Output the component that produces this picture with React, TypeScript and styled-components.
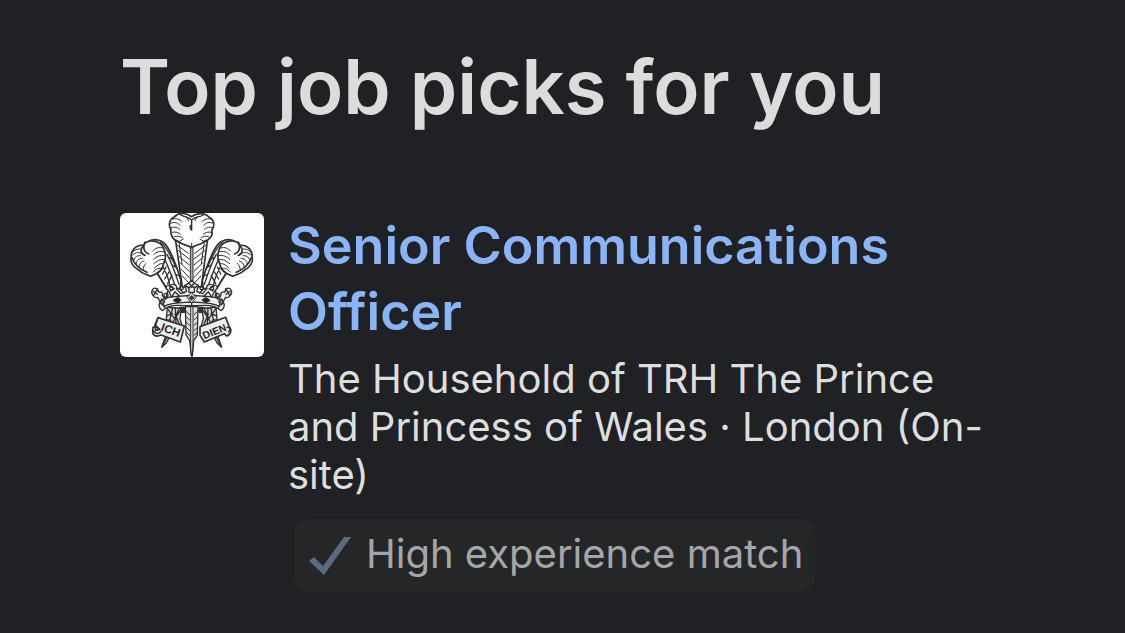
import React from 'react';
import styled, { createGlobalStyle } from 'styled-components';

const GlobalStyle = createGlobalStyle`
  *, *::before, *::after { box-sizing: border-box; }
  body {
    margin: 0;
    background: #202124;
    font-family: Inter, "Liberation Sans", sans-serif;
  }
`;

const Page = styled.main`
  min-height: 100vh;
  padding: 38px 120px;
  background: #202124;
`;

const Heading = styled.h1`
  margin: 0 0 79px;
  color: #dcdcdc;
  font-size: 76px;
  font-weight: 600;
  line-height: 96px;
`;

const JobCard = styled.article`
  display: flex;
  align-items: flex-start;
  gap: 24px;
`;

const LogoFrame = styled.div`
  flex: none;
  width: 144px;
  height: 144px;
  border-radius: 6px;
  overflow: hidden;
  background: #fff;

  svg { display: block; width: 100%; height: 100%; }
`;

const Details = styled.div`
  flex: 1;
  min-width: 0;
`;

const JobTitle = styled.h2`
  margin: 0 0 10px;
  font-size: 52px;
  font-weight: 600;
  line-height: 66px;
`;

const JobLink = styled.a`
  color: #8ab4f8;
  text-decoration: none;
`;

const Company = styled.p`
  margin: 0;
  color: #dedede;
  font-size: 40px;
  line-height: 48px;
`;

const Badge = styled.div`
  display: inline-flex;
  align-items: center;
  gap: 12px;
  height: 72px;
  margin: 20px 0 0 6px;
  padding: 0 12px 4px;
  border-radius: 14px;
  background: #252628;
  color: #a5a6a8;
  font-size: 40px;
  white-space: nowrap;

  svg { flex: none; width: 48px; height: 48px; }
`;

const SideFeather = () => (
  <g>
    <path fill="#fff" strokeWidth="5" d="M104 113C125 97 153 103 166 126C184 153 195 188 207 226L204 251L164 250L135 204L149 181L118 144Z" />
    <path strokeWidth="4" d="M145 111C166 126 177 156 193 188M165 148C180 174 192 210 201 238M157 161C172 191 181 219 190 244M151 183C164 204 171 225 176 248M136 205L163 250M162 186L152 207M171 201L158 222M180 211L167 236M169 157L183 163M181 180L195 189M190 207L202 213" />
    <path fill="#fff" strokeWidth="5" d="M95 120C69 120 55 138 58 158C53 170 64 187 80 195C91 208 105 207 116 214C134 207 153 198 154 177C166 159 160 130 145 116C126 102 102 107 95 120Z" />
    <path strokeWidth="5" d="M97 118C82 133 86 147 99 151M99 111C91 131 96 141 110 147M60 158C67 177 84 193 105 202" />
    <path strokeWidth="3" d="M153 129C139 125 129 130 122 138M158 141C143 136 133 141 125 149M159 152C144 149 133 155 125 163M157 164C144 161 134 169 125 176M153 176C141 174 134 184 127 190M146 190C139 188 130 194 124 201M64 139C71 133 79 131 86 132M61 151C69 142 77 141 87 144M65 166C68 154 77 151 85 152M72 177C74 164 82 160 91 160M81 187C81 176 89 169 96 168M93 197C93 186 98 178 102 175" />
  </g>
);

const SideCrown = () => (
  <g strokeWidth="4">
    <path fill="#ddd" d="M166 306L185 309L208 309L204 342L212 367L192 365L174 345L163 344Z" />
    <path d="M166 310L188 341L204 318M182 307L174 344M189 327L204 362M202 309L184 350M164 333L181 325M190 309L192 354" />
    <path fill="#333" d="M205 307H217V322H208Z" />
    <path fill="#bbb" d="M163 387L149 427L163 414L174 392Z" />
    <path d="M167 390L151 425" />
    <path fill="#eee" d="M121 255C126 245 139 250 139 261C148 259 154 264 151 272L161 283L168 255C157 249 164 237 174 242C184 233 198 242 193 251L206 266L224 259L218 242L239 230V302H213C183 299 166 303 151 317C139 308 139 299 145 291L137 277C126 281 115 265 121 255Z" />
    <path d="M124 259L136 268M137 251L125 271M151 283C181 270 207 276 239 270M155 304C180 291 207 293 239 291M170 258L179 277L189 260L204 275M172 243L187 252L175 258M202 251L216 264M219 241L232 250M151 291L160 310" />
    <path fill="#222" d="M185 286L196 278L207 285L197 293Z" />
    <path fill="#777" d="M143 292L149 282L158 289L151 300Z" />
    <circle cx="178" cy="250" r="5" />
    <circle cx="162" cy="271" r="6" />
    <circle cx="209" cy="249" r="5" />
  </g>
);

const Crest = () => (
  <svg viewBox="24 24 432 432" role="img" aria-label="Prince of Wales's feathers">
    <g fill="none" stroke="#303030" strokeLinejoin="round" strokeLinecap="round">
      <SideFeather />
      <g transform="translate(478 0) scale(-1 1)"><SideFeather /></g>

      <path fill="#fff" strokeWidth="5" d="M190 101L211 246H268L287 101Z" />
      <path fill="#aaa" strokeWidth="3" d="M235 124V248H243V124Z" />
      <path strokeWidth="3" d="M193 108L216 119M196 121L229 145M199 137L232 162M202 155L232 180M205 174L232 199M208 193L232 218M211 213L232 235M284 108L262 119M281 121L248 145M278 137L246 162M275 155L246 180M272 174L246 199M269 193L246 218M267 213L246 235M201 111L210 176M277 111L268 176" />
      <path fill="#fff" strokeWidth="5" d="M239 35C221 24 201 21 188 35C172 42 168 61 177 74C174 90 184 107 200 110C214 123 229 119 239 128C252 119 267 120 278 108C296 104 304 88 299 76C311 60 305 43 291 36C277 21 254 24 239 35Z" />
      <path strokeWidth="4" d="M205 29C218 38 228 34 239 45C250 34 263 38 275 29M239 47V76M235 61V72" />
      <path strokeWidth="3" d="M181 43C193 38 203 43 210 50M176 55C188 49 199 54 204 61M177 68C189 64 198 68 203 73M181 82C191 79 199 83 205 87M188 95C198 91 206 95 211 98M299 43C287 38 277 43 270 50M304 55C291 49 281 54 275 61M302 68C290 64 282 68 277 73M298 82C288 79 280 83 274 87M290 95C280 91 272 95 268 98M222 35L230 47M256 35L249 47M204 108L214 102M274 108L264 102M239 115V127" />

      <SideCrown />
      <g transform="translate(478 0) scale(-1 1)"><SideCrown /></g>
      <path fill="#eee" strokeWidth="3" d="M239 263L252 278L239 294L226 278Z" />
      <path fill="#333" strokeWidth="2" d="M231 278L239 271L247 279L239 286Z" />
      <path fill="#eee" strokeWidth="4" d="M239 226L247 234L239 243L231 234ZM231 246H247V262H231Z" />
      <path fill="#ddd" strokeWidth="4" d="M220 305H258L256 391L245 407L241 453H238L233 407L222 390Z" />
      <path strokeWidth="3" d="M236 307V445M243 307V438" />
      <path strokeWidth="3" d="M222 319L233 329M222 335L233 345M222 351L233 361M223 367L233 377M224 383L233 391M257 319L246 329M257 335L246 345M257 351L246 361M256 367L246 377M255 383L246 391" />

      <path fill="#eee" strokeWidth="5" d="M138 338L217 363L205 411L147 390C130 398 119 389 123 376C118 363 132 364 131 376L143 373L128 362Z" />
      <path strokeWidth="4" d="M138 338L131 361L143 373M124 377C131 390 143 386 147 379" />
      <path fill="#eee" strokeWidth="5" d="M264 365L341 337L352 366C361 375 355 391 343 393L337 386L277 411L264 391Z" />
      <path strokeWidth="4" d="M345 367C353 365 357 376 349 381" />
    </g>
    <g fill="#222" fontFamily="Liberation Sans, sans-serif" fontWeight="700">
      <text transform="translate(145 376) rotate(20)" fontSize="34">ICH</text>
      <text transform="translate(277 403) rotate(-22)" fontSize="31">DIEN</text>
    </g>
  </svg>
);

const CheckIcon = () => (
  <svg viewBox="0 0 48 48" aria-hidden="true">
    <path d="M3 32L8 28L17 37L38 8H45L18 46Z" fill="#5b6b7e" />
  </svg>
);

export default function App() {
  return (
    <>
      <GlobalStyle />
      <Page>
        <Heading>Top job picks for you</Heading>
        <JobCard>
          <LogoFrame><Crest /></LogoFrame>
          <Details>
            <JobTitle>
              <JobLink href="#senior-communications-officer">Senior Communications Officer</JobLink>
            </JobTitle>
            <Company>
              The Household of TRH The Prince and Princess of Wales · London (On-site)
            </Company>
            <Badge><CheckIcon />High experience match</Badge>
          </Details>
        </JobCard>
      </Page>
    </>
  );
}
